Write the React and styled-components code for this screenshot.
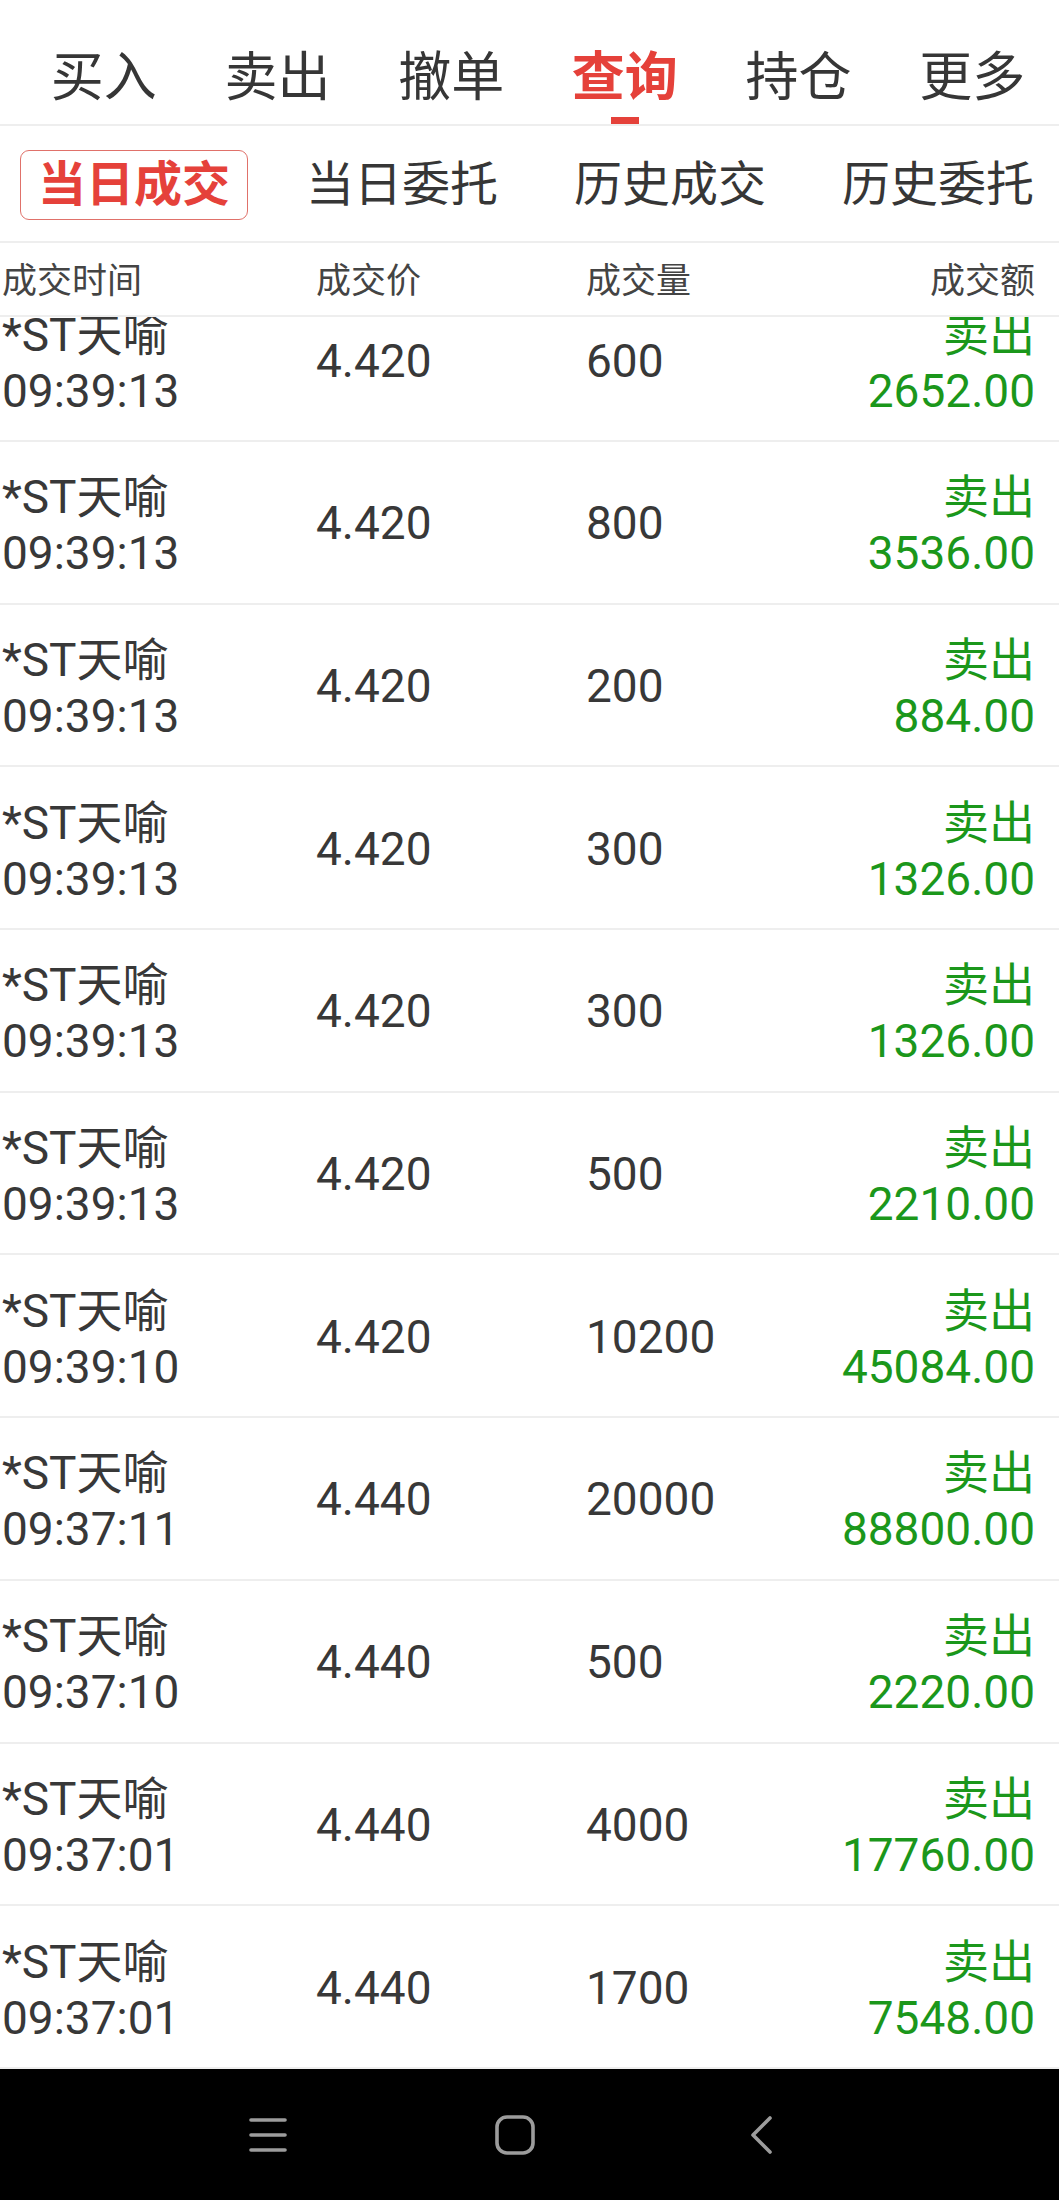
import styled, { createGlobalStyle } from "styled-components";

const GlobalStyle = createGlobalStyle`
  html, body {
    margin: 0;
    padding: 0;
    background: #fff;
  }
  body {
    font-family: Roboto, "Noto Sans CJK SC", sans-serif;
    color: #333;
  }
`;

const RED = "#e5413a";
const GREEN = "#1b971b";
const LINE = "#eeeeee";

const Page = styled.div`
  width: 1059px;
  height: 2200px;
  display: flex;
  flex-direction: column;
  overflow: hidden;
`;

const TopTabs = styled.div`
  display: grid;
  grid-template-columns: repeat(6, 1fr);
  padding: 22px 0 0 17px;
  height: 126px;
  box-sizing: border-box;
  border-bottom: 2px solid ${LINE};
  flex-shrink: 0;
`;

const TopTab = styled.div`
  position: relative;
  display: flex;
  align-items: center;
  justify-content: center;
  font-size: 53px;
  font-weight: ${(p) => (p.$active ? 700 : 400)};
  color: ${(p) => (p.$active ? RED : "#363636")};

  &::after {
    content: "";
    display: ${(p) => (p.$active ? "block" : "none")};
    position: absolute;
    bottom: 0;
    left: 50%;
    width: 28px;
    height: 7px;
    margin-left: -14px;
    background: ${RED};
  }
`;

const SubTabs = styled.div`
  display: grid;
  grid-template-columns: repeat(4, 268px);
  height: 117px;
  box-sizing: border-box;
  border-bottom: 2px solid ${LINE};
  overflow: hidden;
  flex-shrink: 0;
  padding-top: 2px;
`;

const SubTab = styled.div`
  display: flex;
  align-items: center;
  justify-content: center;
`;

const SubLabel = styled.span`
  font-size: 48px;
  line-height: 1;
  padding: 10px 17px;
  height: 70px;
  box-sizing: border-box;
  display: flex;
  align-items: center;
  border-radius: 9px;
  border: 1.5px solid ${(p) => (p.$active ? "#e0716a" : "transparent")};
  color: ${(p) => (p.$active ? RED : "#363636")};
  font-weight: ${(p) => (p.$active ? 700 : 400)};
`;

const Columns = styled.div`
  display: grid;
  grid-template-columns: 314px 270px 1fr auto;
  padding: 0 24px 0 2px;
`;

const HeadRow = styled(Columns)`
  height: 74px;
  box-sizing: border-box;
  border-bottom: 2px solid ${LINE};
  align-items: center;
  font-size: 35px;
  color: #444;
  flex-shrink: 0;
  padding-bottom: 3px;
`;

const Viewport = styled.div`
  flex: 1;
  overflow: hidden;
`;

const List = styled.div`
  margin-top: -37.7px;
`;

const Row = styled(Columns)`
  height: 162.7px;
  box-sizing: border-box;
  border-bottom: 2px solid ${LINE};
  align-items: center;
  font-size: 46px;
  color: #383838;
  padding-top: 2px;
`;

const Stack = styled.div`
  display: flex;
  flex-direction: column;
  line-height: 56px;
  padding-top: 4px;
  align-items: ${(p) => (p.$right ? "flex-end" : "flex-start")};
  color: ${(p) => (p.$green ? GREEN : "inherit")};
  white-space: nowrap;
`;

const Cell = styled.div`
  white-space: nowrap;
`;

const HeadCell = styled.div`
  text-align: ${(p) => (p.$right ? "right" : "left")};
`;

const NavBar = styled.div`
  height: 131px;
  flex-shrink: 0;
  background: #000;
  display: flex;
  align-items: center;
  padding-left: 228px;
  gap: 167px;
`;

const NavButton = styled.div`
  width: 80px;
  display: flex;
  justify-content: center;
  align-items: center;
  color: #9c9c9c;
`;

const topTabs = ["买入", "卖出", "撤单", "查询", "持仓", "更多"];
const subTabs = ["当日成交", "当日委托", "历史成交", "历史委托"];

const trades = [
  ["09:39:13", "4.420", "600", "2652.00"],
  ["09:39:13", "4.420", "800", "3536.00"],
  ["09:39:13", "4.420", "200", "884.00"],
  ["09:39:13", "4.420", "300", "1326.00"],
  ["09:39:13", "4.420", "300", "1326.00"],
  ["09:39:13", "4.420", "500", "2210.00"],
  ["09:39:10", "4.420", "10200", "45084.00"],
  ["09:37:11", "4.440", "20000", "88800.00"],
  ["09:37:10", "4.440", "500", "2220.00"],
  ["09:37:01", "4.440", "4000", "17760.00"],
  ["09:37:01", "4.440", "1700", "7548.00"],
];

const MenuIcon = () => (
  <svg width="40" height="36" viewBox="0 0 40 36" fill="none" stroke="currentColor" strokeWidth="3.6" strokeLinecap="round">
    <line x1="3" y1="3" x2="37" y2="3" />
    <line x1="3" y1="18" x2="37" y2="18" />
    <line x1="3" y1="33" x2="37" y2="33" />
  </svg>
);

const HomeIcon = () => (
  <svg width="40" height="40" viewBox="0 0 40 40" fill="none" stroke="currentColor" strokeWidth="3.6">
    <rect x="2" y="2" width="36" height="36" rx="10" />
  </svg>
);

const BackIcon = () => (
  <svg width="24" height="40" viewBox="0 0 24 40" fill="none" stroke="currentColor" strokeWidth="3.6" strokeLinecap="round" strokeLinejoin="round">
    <polyline points="20,3 3,20 20,37" />
  </svg>
);

export default function App() {
  return (
    <>
      <GlobalStyle />
      <Page>
        <TopTabs>
          {topTabs.map((t) => (
            <TopTab key={t} $active={t === "查询"}>
              {t}
            </TopTab>
          ))}
        </TopTabs>
        <SubTabs>
          {subTabs.map((t, i) => (
            <SubTab key={t}>
              <SubLabel $active={i === 0}>{t}</SubLabel>
            </SubTab>
          ))}
        </SubTabs>
        <HeadRow>
          <HeadCell>成交时间</HeadCell>
          <HeadCell>成交价</HeadCell>
          <HeadCell>成交量</HeadCell>
          <HeadCell $right>成交额</HeadCell>
        </HeadRow>
        <Viewport>
          <List>
            {trades.map(([time, price, qty, amount], i) => (
              <Row key={i}>
                <Stack>
                  <span>*ST天喻</span>
                  <span>{time}</span>
                </Stack>
                <Cell>{price}</Cell>
                <Cell>{qty}</Cell>
                <Stack $right $green>
                  <span>卖出</span>
                  <span>{amount}</span>
                </Stack>
              </Row>
            ))}
          </List>
        </Viewport>
        <NavBar>
          <NavButton>
            <MenuIcon />
          </NavButton>
          <NavButton>
            <HomeIcon />
          </NavButton>
          <NavButton>
            <BackIcon />
          </NavButton>
        </NavBar>
      </Page>
    </>
  );
}
